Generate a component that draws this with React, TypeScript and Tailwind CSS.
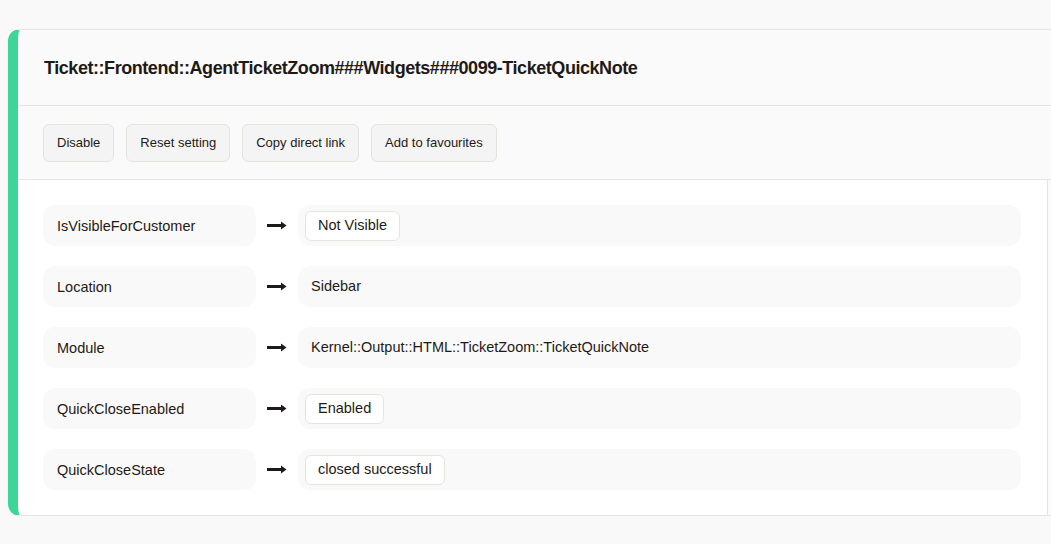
import React from 'react';

type Row = { key: string; value: string; pill?: boolean };

const rows: Row[] = [
    { key: 'IsVisibleForCustomer', value: 'Not Visible', pill: true },
    { key: 'Location', value: 'Sidebar' },
    { key: 'Module', value: 'Kernel::Output::HTML::TicketZoom::TicketQuickNote' },
    { key: 'QuickCloseEnabled', value: 'Enabled', pill: true },
    { key: 'QuickCloseState', value: 'closed successful', pill: true },
];

const actions = ['Disable', 'Reset setting', 'Copy direct link', 'Add to favourites'];

const Arrow = () => (
    <svg width="20" height="9" viewBox="0 0 20 9" className="shrink-0">
        <rect x="0" y="3" width="15" height="3" fill="#1f1a17" />
        <path d="M14 0.5 L19.5 4.5 L14 8.5 Z" fill="#1f1a17" />
    </svg>
);

export default function App() {
    return (
        <div className="h-screen overflow-hidden bg-[#f9f9f9] pt-[29px] pl-2 font-['Liberation_Sans',Arial,sans-serif] text-[#1f1a17]">
            <div className="w-[1070px] rounded-l-xl border-l-[10px] border-y border-l-[#3dd598] border-y-[#e5e5e5] bg-[#fafafa]">
                {/* Header */}
                <div className="h-[76px] flex items-center pl-[26px] border-b border-[#e5e5e5]">
                    <h1 className="text-[18px] font-bold tracking-[-0.45px] pt-[2px]">
                        Ticket::Frontend::AgentTicketZoom###Widgets###0099-TicketQuickNote
                    </h1>
                </div>

                {/* Toolbar */}
                <div className="h-[74px] flex items-center gap-3 pl-[25px] border-b border-[#e5e5e5]">
                    {actions.map(a => (
                        <button
                            key={a}
                            className="h-[38px] px-[13px] rounded-md border border-[#e6e3df] bg-[#f4f4f4] text-[13px] text-[#1f1a17]"
                        >
                            {a}
                        </button>
                    ))}
                </div>

                {/* Settings */}
                <div className="w-[1030px] bg-white border-r border-[#e5e5e5] pt-[25px] pb-[25px] pl-[25px] pr-[26px] flex flex-col gap-[20px] rounded-bl-xl">
                    {rows.map(r => (
                        <div key={r.key} className="flex items-center h-[41px]">
                            <div className="w-[213px] h-full flex items-center pl-[14px] pt-[2px] rounded-xl bg-[#f9f9f9] text-[14.5px]">
                                {r.key}
                            </div>
                            <div className="w-[42px] flex justify-center">
                                <Arrow />
                            </div>
                            <div className="flex-1 h-full flex items-center rounded-xl bg-[#f9f9f9] px-[7px] text-[14.5px]">
                                {r.pill ? (
                                    <span className="h-[30px] flex items-center px-3 rounded-md border border-[#e8e4e0] bg-white">
                                        {r.value}
                                    </span>
                                ) : (
                                    <span className="px-[6px]">{r.value}</span>
                                )}
                            </div>
                        </div>
                    ))}
                </div>
            </div>
        </div>
    );
}
